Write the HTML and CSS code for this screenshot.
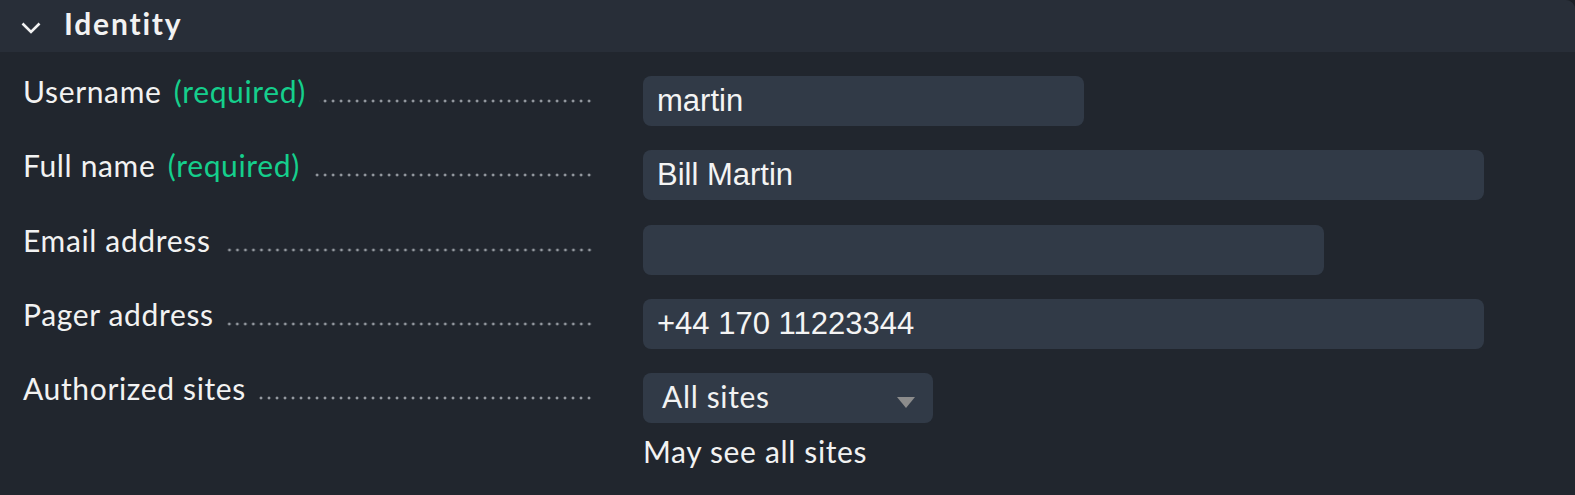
FILE: index.html
```
<!DOCTYPE html>
<html lang="en">
<head>
  <meta charset="UTF-8" />
  <title>Edit user</title>
  <link rel="stylesheet" href="styles.css">
</head>
<body>

  <div class="section">
    <div class="section-head">
      <svg class="chevron" width="20" height="12" viewBox="0 0 20 12">
        <polyline points="1.5,1.5 10,10 18.5,1.5" fill="none" stroke="#f2f2f2" stroke-width="2.6" stroke-linejoin="miter" />
      </svg>
      <span class="title">Identity</span>
    </div>

    <div class="form">
      <div class="row">
        <div class="label"><span class="text">Username <span class="req">(required)</span></span><span class="dots"></span></div>
        <div class="field"><input class="input w-short" type="text" value="martin"></div>
      </div>
      <div class="row">
        <div class="label"><span class="text">Full name <span class="req">(required)</span></span><span class="dots"></span></div>
        <div class="field"><input class="input w-long" type="text" value="Bill Martin"></div>
      </div>
      <div class="row">
        <div class="label"><span class="text">Email address</span><span class="dots"></span></div>
        <div class="field"><input class="input w-mid" type="text" value=""></div>
      </div>
      <div class="row">
        <div class="label"><span class="text">Pager address</span><span class="dots"></span></div>
        <div class="field"><input class="input w-long" type="text" value="+44 170 11223344"></div>
      </div>
      <div class="row">
        <div class="label"><span class="text">Authorized sites</span><span class="dots"></span></div>
        <div class="field">
          <div class="select">
            <span class="select-value">All sites</span>
            <span class="arrow"></span>
          </div>
          <div class="hint">May see all sites</div>
        </div>
      </div>
    </div>
  </div>

</body>
</html>
```

FILE: styles.css
```
body {
  margin: 0;
  background: #1c2027;
  font-family: Lato, "Open Sans", sans-serif;
  color: #f2f2f2;
}
.section {
  height: 495px;
  background: #21262e;
  border-top-right-radius: 9px;
  overflow: hidden;
}
.section-head {
  height: 52px;
  display: flex;
  align-items: flex-start;
  background: #282e38;
}
.chevron {
  margin: 22px 0 0 21px;
}
.title {
  margin: 8px 0 0 23px;
  font-weight: bold;
  font-size: 30px;
  line-height: 30px;
  letter-spacing: 1.8px;
}
.form {
  padding-top: 24px;
}
.row {
  display: flex;
  align-items: flex-start;
  margin-bottom: 24.3px;
}
.label {
  width: 570px;
  padding-left: 23px;
  margin-right: 50px;
  display: flex;
  align-items: baseline;
  font-size: 30px;
  line-height: 30px;
  letter-spacing: 0.65px;
  white-space: nowrap;
}
.req {
  margin-left: 4px;
  color: #15cf8c;
}
.dots {
  flex: 1;
  height: 4px;
  margin-left: 13px;
  background-image: radial-gradient(circle, #959aa1 1.3px, transparent 1.7px);
  background-size: 8px 4px;
  background-repeat: repeat-x;
  background-position: right bottom;
}
.input {
  display: block;
  box-sizing: border-box;
  height: 50px;
  padding: 0 14px;
  border: none;
  border-radius: 8px;
  background: #313a47;
  color: #f4f4f4;
  font-family: "Liberation Sans", Arial, sans-serif;
  font-size: 31px;
  outline: none;
}
.w-short { width: 441px; }
.w-mid { width: 681px; }
.w-long { width: 841px; }
.select {
  box-sizing: border-box;
  width: 290px;
  height: 50px;
  padding: 8px 18px 0 19px;
  display: flex;
  align-items: flex-start;
  background: #313a47;
  border-radius: 8px;
  font-size: 30px;
  line-height: 30px;
  letter-spacing: 0.65px;
}
.select-value {
  flex: 1;
}
.arrow {
  margin-top: 16px;
  width: 0;
  height: 0;
  border-left: 9px solid transparent;
  border-right: 9px solid transparent;
  border-top: 11px solid #8c8c8c;
}
.hint {
  margin-top: 13px;
  font-size: 30px;
  line-height: 30px;
  letter-spacing: 0.65px;
}
```
